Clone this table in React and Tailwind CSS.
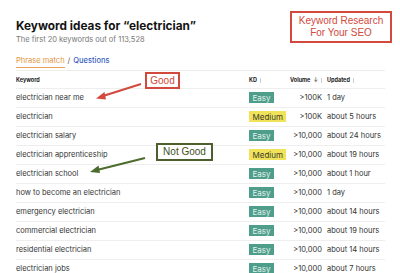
import React from "react";

const rows = [
  ["electrician near me", "Easy", ">100K", "1 day"],
  ["electrician", "Medium", ">100K", "about 5 hours"],
  ["electrician salary", "Easy", ">10,000", "about 24 hours"],
  ["electrician apprenticeship", "Medium", ">10,000", "about 19 hours"],
  ["electrician school", "Easy", ">10,000", "about 1 hour"],
  ["how to become an electrician", "Easy", ">10,000", "1 day"],
  ["emergency electrician", "Easy", ">10,000", "about 14 hours"],
  ["commercial electrician", "Easy", ">10,000", "about 19 hours"],
  ["residential electrician", "Easy", ">10,000", "about 14 hours"],
  ["electrician jobs", "Easy", ">10,000", "about 7 hours"],
];

function Badge({ kd }) {
  if (kd === "Easy")
    return (
      <span className="inline-flex h-[11px] items-center bg-[#4e9e8b] px-[3.5px] text-[8px] leading-none text-[#e3f1ec]">
        Easy
      </span>
    );
  return (
    <span className="inline-flex h-[11px] items-center bg-[#f0e35a] px-[3.5px] text-[8px] leading-none text-[#3a3a2a]">
      Medium
    </span>
  );
}

export default function App() {
  return (
    <div className="relative h-[273px] w-[400px] overflow-hidden bg-white font-['Inter',sans-serif] text-[#2b2b2b]">
      <div className="pl-4 pr-[15px] pt-[19px]">
        <h1 className="text-[11.8px] font-bold leading-[14px] text-[#141414]">
          Keyword ideas for “electrician”
        </h1>
        <p className="mt-[2px] text-[7.5px] leading-[10px] text-[#777]">
          The first 20 keywords out of 113,528
        </p>
        <div className="mt-[11px] flex items-center gap-[3px] text-[7.5px] leading-[10px]">
          <span className="border-b border-[#e8a25a] pb-[1px] text-[#e29440]">Phrase match</span>
          <span className="pb-[2px] text-[#555]">/</span>
          <span className="pb-[2px] font-medium text-[#3a5fbf]">Questions</span>
        </div>
        <div className="mt-[2px] border-t border-[#ececec]">
          <div className="flex h-[17px] items-center pt-[1px] text-[5.5px] font-bold text-[#222]">
            <div className="flex-1">Keyword</div>
            <div className="flex w-[41px] items-center gap-[3px]">
              KD <span className="h-[5px] w-px bg-[#ccc]" />
            </div>
            <div className="flex w-[32px] items-center justify-end gap-[3px]">
              Volume <span className="font-normal">↓</span>
              <span className="h-[5px] w-px bg-[#ccc]" />
            </div>
            <div className="flex w-[63px] items-center gap-[3px] pl-[5px]">
              Updated <span className="h-[5px] w-px bg-[#ccc]" />
            </div>
          </div>
          {rows.map(([k, kd, v, u]) => (
            <div
              key={k}
              className="flex h-[19px] items-center border-t border-[#eeeeee] text-[7.5px] text-[#333]"
            >
              <div className="flex-1">{k}</div>
              <div className="w-[41px]">
                <Badge kd={kd} />
              </div>
              <div className="w-[32px] text-right">{v}</div>
              <div className="w-[63px] pl-[5px]">{u}</div>
            </div>
          ))}
        </div>
      </div>

      {/* Annotations */}
      <div className="absolute left-[290px] top-[11px] flex h-[32px] w-[102px] flex-col items-center justify-center border-2 border-[#d2493d] font-['Liberation_Sans',sans-serif] text-[10px] leading-[12px] text-[#d2493d]">
        <span>Keyword Research</span>
        <span>For Your SEO</span>
      </div>
      <div className="absolute left-[145px] top-[72px] flex h-[17px] w-[35px] items-center justify-center border-2 border-[#d2493d] bg-white font-['Liberation_Sans',sans-serif] text-[10px] leading-none text-[#d2493d]">
        Good
      </div>
      <div className="absolute left-[156px] top-[143px] flex h-[18px] w-[57px] items-center justify-center border-2 border-[#4c5f2c] bg-white font-['Liberation_Sans',sans-serif] text-[10px] leading-none text-[#3f4f24]">
        Not Good
      </div>
      <svg className="absolute left-0 top-0" width="400" height="273" viewBox="0 0 400 273">
        <line x1="141" y1="84" x2="103" y2="96" stroke="#d2493d" strokeWidth="2" />
        <polygon points="96,98.5 104.5,92 106,99.5" fill="#d2493d" />
        <line x1="145" y1="158" x2="97" y2="170" stroke="#4c6b2c" strokeWidth="2" />
        <polygon points="90,172 98.5,165.5 100,173" fill="#4c6b2c" />
      </svg>
    </div>
  );
}
